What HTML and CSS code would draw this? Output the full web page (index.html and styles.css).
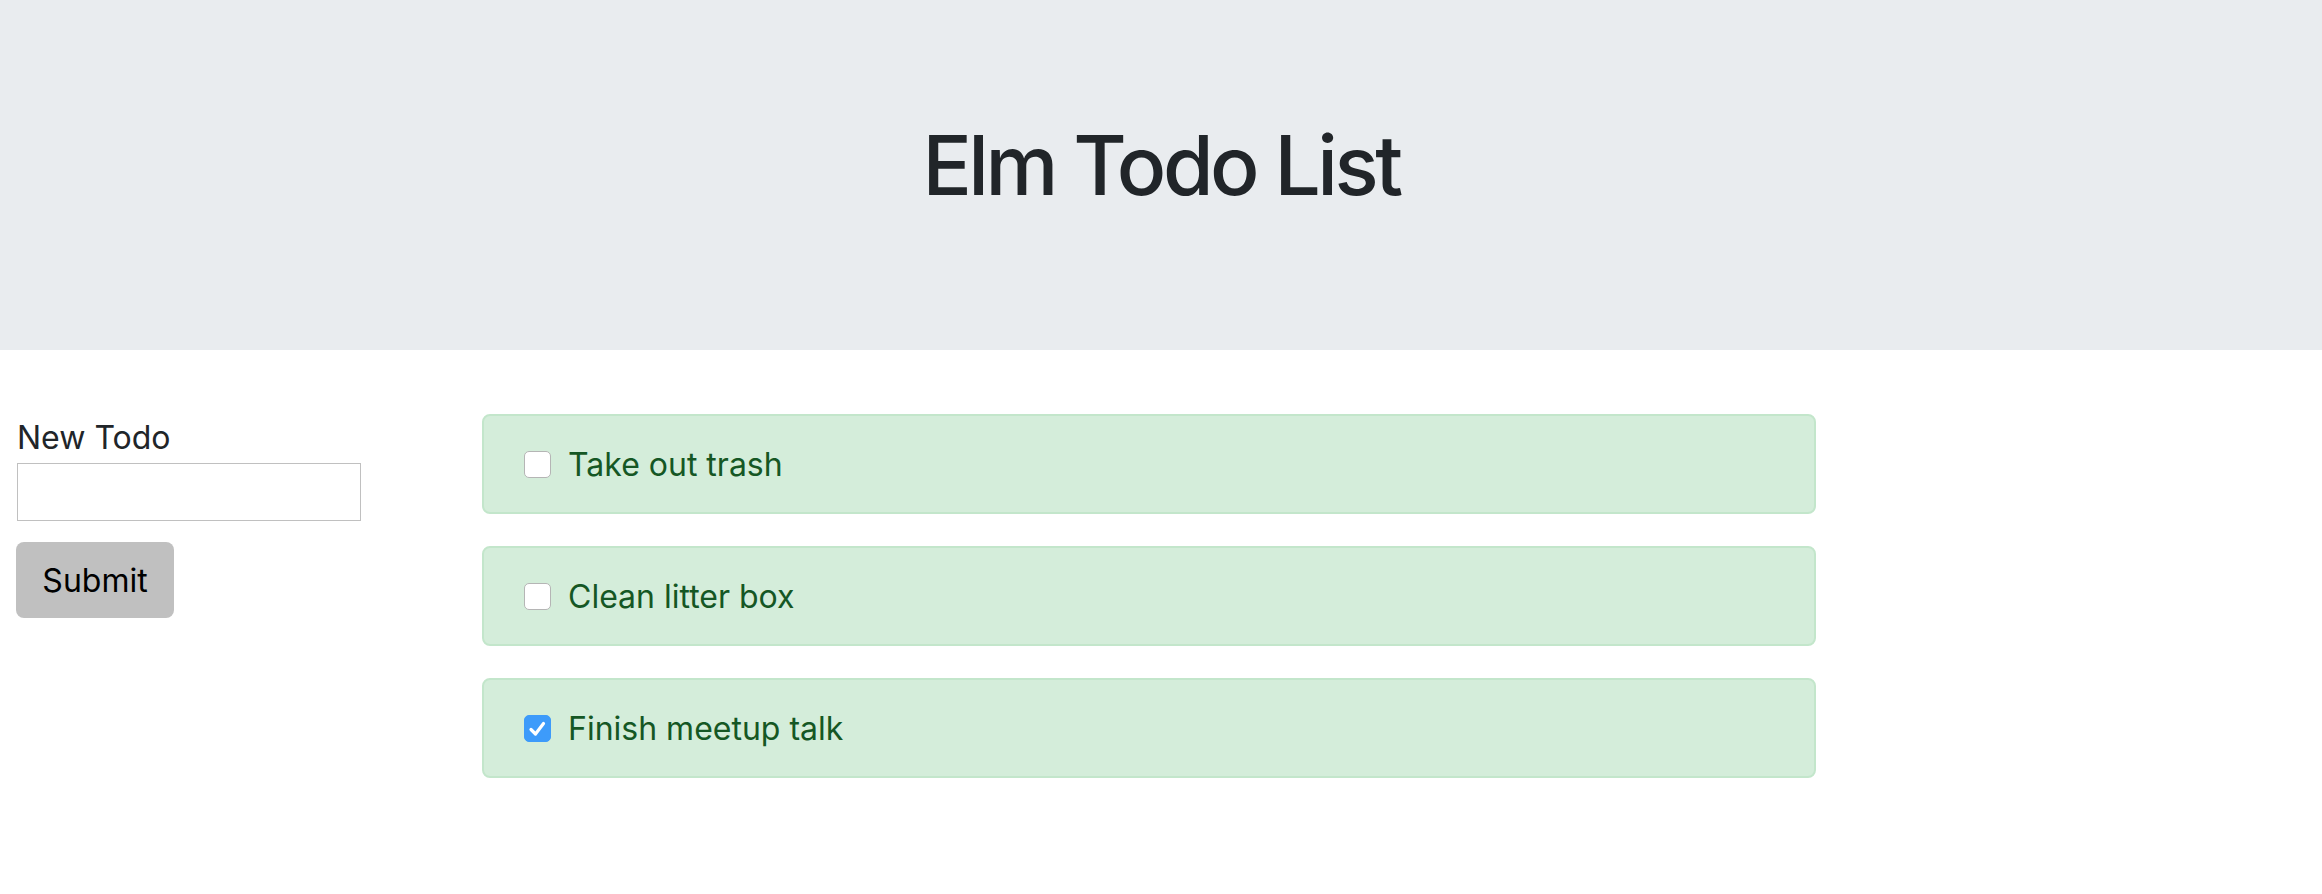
FILE: index.html
```html
<!DOCTYPE html>
<html lang="en">
<head>
<meta charset="utf-8">
<title>Elm Todo List</title>
<link rel="stylesheet" href="styles.css">
</head>
<body>
<header class="jumbotron">
  <h1 class="title">Elm Todo List</h1>
</header>
<main class="content">
  <form class="new-todo">
    <label class="new-todo-label" for="todo">New Todo</label>
    <input class="new-todo-input" id="todo" type="text">
    <button class="submit" type="button">Submit</button>
  </form>
  <ul class="todos">
    <li class="todo">
      <span class="check"></span>
      <span class="todo-text">Take out trash</span>
    </li>
    <li class="todo">
      <span class="check"></span>
      <span class="todo-text">Clean litter box</span>
    </li>
    <li class="todo">
      <span class="check checked">
        <svg viewBox="0 0 27 27" width="27" height="27"><path d="M7 14.5 L11.5 19 L19.5 8.5" fill="none" stroke="#fff" stroke-width="3.2" stroke-linecap="round" stroke-linejoin="round"/></svg>
      </span>
      <span class="todo-text">Finish meetup talk</span>
    </li>
  </ul>
</main>
</body>
</html>
```

FILE: styles.css
```css
* { box-sizing: border-box; }

body {
  margin: 0;
  font-family: Inter, "Liberation Sans", sans-serif;
  color: #212529;
  background: #fff;
}

.jumbotron {
  background: #e9ecef;
  height: 350px;
  padding-top: 118px;
  margin-bottom: 64px;
}

.title {
  margin: 0;
  font-size: 82px;
  line-height: 96px;
  font-weight: 500;
  letter-spacing: -3.5px;
  text-align: center;
  color: #212529;
}

.content {
  display: flex;
  align-items: flex-start;
  padding-left: 17px;
  gap: 121px;
}

.new-todo {
  display: flex;
  flex-direction: column;
  align-items: flex-start;
  width: 344px;
}

.new-todo-label {
  font-size: 32px;
  line-height: 48px;
  color: #212529;
  margin-bottom: 1px;
}

.new-todo-input {
  width: 344px;
  height: 58px;
  border: 1px solid #c0c0c0;
  margin: 0;
  padding: 0 8px;
  font-size: 32px;
  font-family: inherit;
}

.submit {
  margin: 21px 0 0 -1px;
  width: 158px;
  height: 76px;
  border: none;
  border-radius: 8px;
  background: #c0c0c0;
  color: #000;
  font-family: inherit;
  font-size: 32px;
  padding: 0;
}

.todos {
  list-style: none;
  margin: 0;
  padding: 0;
  width: 1334px;
}

.todo {
  display: flex;
  align-items: center;
  height: 100px;
  padding: 0 40px;
  margin-bottom: 32px;
  background: #d4edda;
  border: 2px solid #c3e6cb;
  border-radius: 8px;
  color: #155724;
  font-size: 32px;
  line-height: 48px;
}

.check {
  flex: none;
  width: 27px;
  height: 27px;
  border: 1px solid #b5b5b5;
  border-radius: 5px;
  background: #fff;
  margin-right: 17px;
  display: flex;
}

.check.checked {
  background: #3d9bfa;
  border-color: #3d9bfa;
}

.check svg { display: block; margin: -1px; }

.todo-text {
  white-space: nowrap;
  padding-top: 2px;
}
```
